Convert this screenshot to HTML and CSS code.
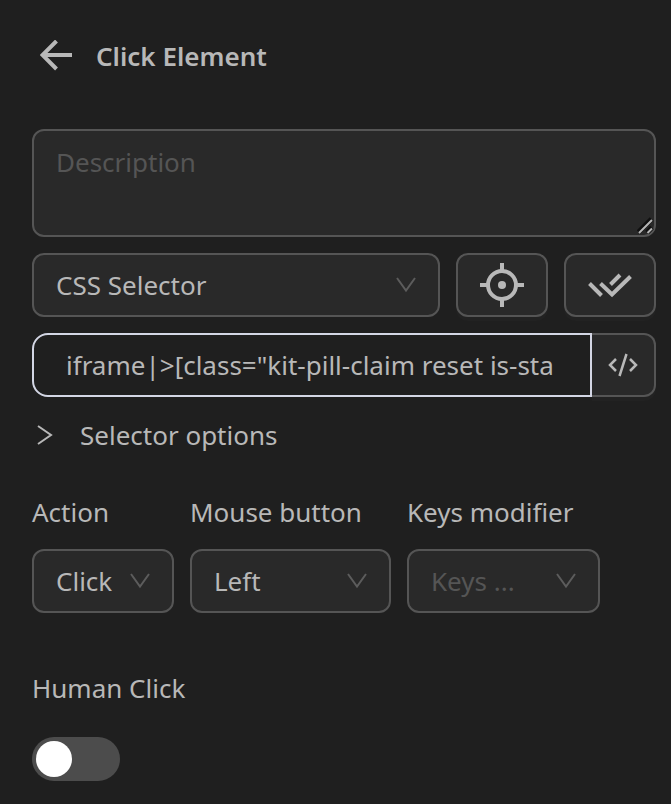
FILE: index.html
```
<!DOCTYPE html>
<html lang="en">

<head>
    <meta charset="UTF-8">
    <meta name="viewport" content="width=device-width, initial-scale=1">
    <title>Click Element</title>
    <link rel="stylesheet" href="styles.css">
</head>

<body>
    <form class="panel">
        <div class="header">
            <button type="button" class="back" aria-label="Back">
                <svg width="32" height="32" viewBox="0 0 32 32" fill="none" stroke="currentColor" stroke-width="4">
                    <path d="M32 15H3M16.500 1L2.500 15L16.500 29" />
                </svg>
            </button>
            <h1 class="title">Click Element</h1>
        </div>

        <div class="description_box">
            <textarea class="description" placeholder="Description" aria-label="Description"></textarea>
            <svg class="grip" width="18" height="18" viewBox="0 0 18 18" fill="none">
                <path d="M1.500 15L14.500 2M10 15.500L15 10.500" stroke="#101010" stroke-width="5" />
                <path d="M2 16L15 3M10.500 16L15 11.500" stroke="#b5b5b5" stroke-width="2" />
            </svg>
        </div>

        <div class="row">
            <div class="select_box grow">
                <select class="select" aria-label="Selector type">
                    <option>CSS Selector</option>
                    <option>XPath</option>
                </select>
                <svg class="arrow" width="20" height="16" viewBox="0 0 20 16">
                    <path d="M1 1L10 13.500L19 1" />
                </svg>
            </div>
            <button type="button" class="btn" aria-label="Select element">
                <svg width="44" height="44" viewBox="0 0 44 44" fill="none" stroke="currentColor" stroke-width="4">
                    <circle cx="22" cy="22" r="14" />
                    <path d="M22 0V8M22 36V44M0 22H8M36 22H44" />
                    <circle cx="22" cy="22" r="4" fill="currentColor" stroke="none" />
                </svg>
            </button>
            <button type="button" class="btn" aria-label="Verify selector">
                <svg width="44" height="44" viewBox="0 0 44 44" fill="none" stroke="currentColor" stroke-width="4">
                    <path d="M1.500 20.500L13.500 32.500M12.500 20.500L24 31.500L42.500 13.500M22.500 21.500L32 12" />
                </svg>
            </button>
        </div>

        <div class="group">
            <input type="text" class="input" aria-label="Selector" value='iframe|>[class="kit-pill-claim reset is-sta'>
            <button type="button" class="code" aria-label="Edit code">
                <svg width="30" height="24" viewBox="0 0 30 24" fill="none" stroke="currentColor" stroke-width="2.500">
                    <path d="M8 6L2 12L8 18M22 6L28 12L22 18M18.500 1L11.500 23" />
                </svg>
            </button>
        </div>

        <details class="options">
            <summary class="summary">
                <svg width="16" height="20" viewBox="0 0 16 20" fill="none" stroke="currentColor" stroke-width="2">
                    <path d="M1 1L14 10L1 19" />
                </svg>
                Selector options
            </summary>
        </details>

        <div class="row fields">
            <div class="field">
                <label for="action">Action</label>
                <div class="select_box action">
                    <select class="select" id="action">
                        <option>Click</option>
                        <option>Hover</option>
                    </select>
                    <svg class="arrow" width="20" height="16" viewBox="0 0 20 16">
                        <path d="M1 1L10 13.500L19 1" />
                    </svg>
                </div>
            </div>
            <div class="field">
                <label for="mouse">Mouse button</label>
                <div class="select_box mouse">
                    <select class="select" id="mouse">
                        <option>Left</option>
                        <option>Right</option>
                    </select>
                    <svg class="arrow" width="20" height="16" viewBox="0 0 20 16">
                        <path d="M1 1L10 13.500L19 1" />
                    </svg>
                </div>
            </div>
            <div class="field">
                <label for="keys">Keys modifier</label>
                <div class="select_box keys">
                    <select class="select empty" id="keys">
                        <option>Keys ...</option>
                        <option>Shift</option>
                    </select>
                    <svg class="arrow" width="20" height="16" viewBox="0 0 20 16">
                        <path d="M1 1L10 13.500L19 1" />
                    </svg>
                </div>
            </div>
        </div>

        <div class="human">
            <label for="human">Human Click</label>
            <input type="checkbox" role="switch" class="switch" id="human">
        </div>
    </form>
</body>

</html>
```
FILE: styles.css
```
* {
    box-sizing: border-box;
}

body {
    margin: 0;
    background-color: #1f1f1f;
    color: #b8b8b8;
    font-family: "Noto Sans", "Open Sans", sans-serif;
    font-size: 26px;
    line-height: 44px;
}

button,
input,
select,
textarea {
    margin: 0;
    font: inherit;
    color: inherit;
}

svg {
    display: block;
}

.panel {
    padding: 34px 15px 20px 32px;
}

.header {
    display: flex;
    align-items: center;
    gap: 24px;
    padding-left: 8px;
    margin-bottom: 51px;
}

.back {
    padding: 0;
    border: 0;
    background: none;
}

.title {
    margin: 0;
    font-size: 26px;
    font-weight: 600;
}

.description_box {
    position: relative;
    margin-bottom: 16px;
}

.description {
    display: block;
    width: 100%;
    height: 108px;
    padding: 9px 22px;
    border: 2px solid #555;
    border-radius: 12px;
    background-color: #292929;
    resize: none;
}

.description::placeholder {
    color: #555;
}

.grip {
    position: absolute;
    right: 1px;
    bottom: 2px;
}

.row {
    display: flex;
    gap: 16px;
    margin-bottom: 16px;
}

.grow {
    flex: 1;
}

.select_box {
    position: relative;
}

.select {
    display: block;
    width: 100%;
    height: 64px;
    padding: 0 22px;
    border: 2px solid #555;
    border-radius: 12px;
    background-color: #292929;
    appearance: none;
}

.empty {
    color: #555;
}

.arrow {
    position: absolute;
    top: 24px;
    right: 24px;
    fill: none;
    stroke: #5c5c5c;
    stroke-width: 2;
    pointer-events: none;
}

.btn {
    display: flex;
    align-items: center;
    justify-content: center;
    width: 92px;
    height: 64px;
    padding: 0;
    border: 2px solid #555;
    border-radius: 12px;
    background-color: #292929;
    box-shadow: 0 4px 0 #222;
}

.group {
    display: flex;
    margin-bottom: 16px;
}

.input {
    flex: 1;
    min-width: 0;
    height: 64px;
    padding: 0 32px;
    border: 2px solid #d3d6e4;
    border-radius: 16px 0 0 16px;
    background-color: #1f1f1f;
    outline: none;
}

.code {
    display: flex;
    align-items: center;
    justify-content: center;
    width: 64px;
    height: 64px;
    padding: 0;
    border: 2px solid #555;
    border-left: 0;
    border-radius: 0 12px 12px 0;
    background-color: #292929;
    box-shadow: 0 4px 0 #222;
}

.options {
    margin-bottom: 33px;
}

.summary {
    display: flex;
    align-items: center;
    gap: 27px;
    padding-left: 5px;
    list-style: none;
}

.field {
    display: flex;
    flex-direction: column;
    gap: 15px;
}

.fields {
    margin-bottom: 53px;
}

.action {
    width: 142px;
}

.mouse {
    width: 201px;
}

.keys {
    width: 193px;
}

.human {
    display: flex;
    flex-direction: column;
    align-items: flex-start;
    gap: 27px;
}

.switch {
    display: flex;
    align-items: center;
    width: 88px;
    height: 44px;
    padding: 4px;
    border-radius: 22px;
    background-color: #4c4c4c;
    appearance: none;
}

.switch::before {
    content: "";
    width: 36px;
    height: 36px;
    border-radius: 50%;
    background-color: #fff;
}

.switch:checked {
    justify-content: flex-end;
}
```
